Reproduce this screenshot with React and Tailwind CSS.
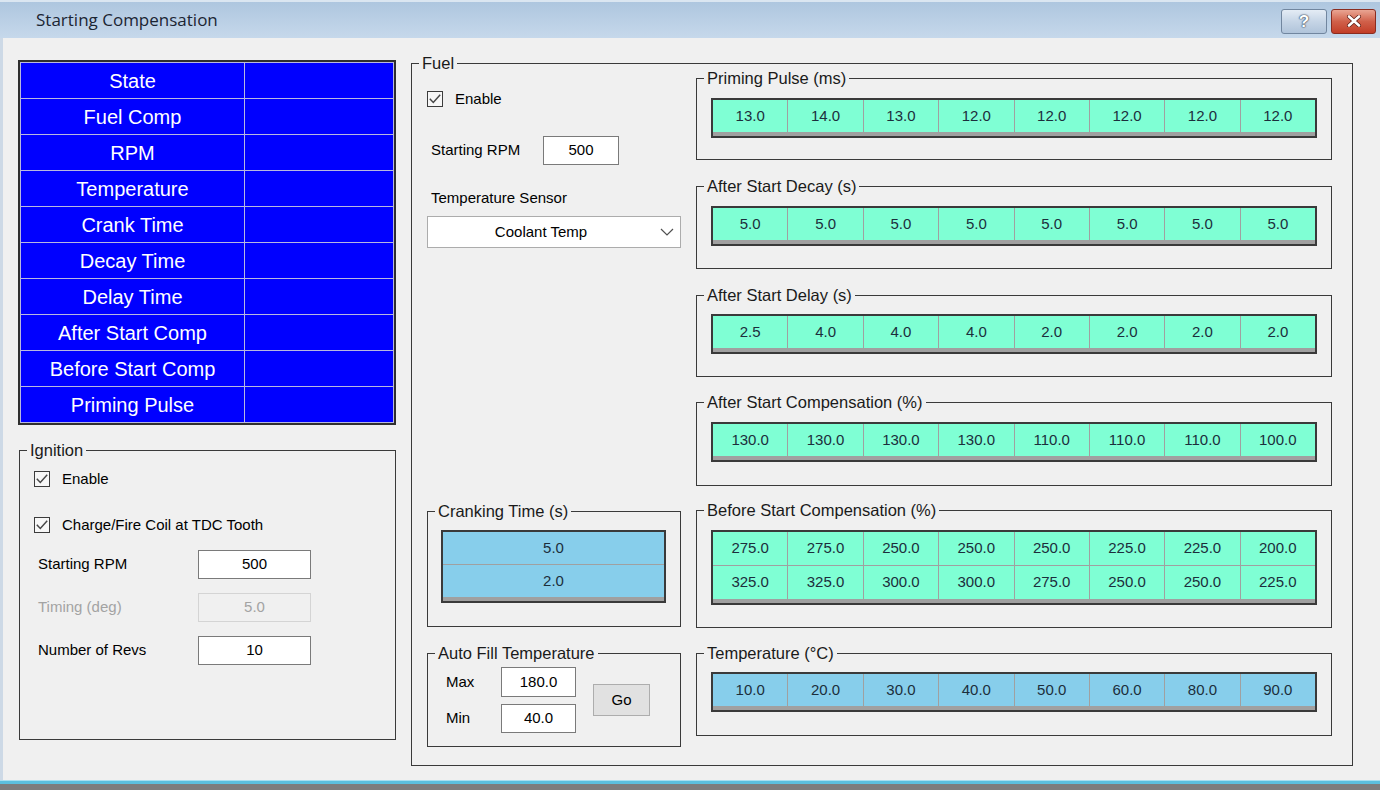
import React from "react";

const GREEN = "bg-[#7fffd4]";
const BLUE = "bg-[#87ceeb]";

function CheckBox({ label }) {
  return (
    <div className="flex items-center h-[16px]">
      <div className="w-[16px] h-[16px] border border-[#3c3c3c] bg-[#f7f7f7] flex items-center justify-center">
        <svg width="14" height="14" viewBox="0 0 14 14">
          <path d="M1.8 6.8 L5.3 10.4 L12.2 2.8" fill="none" stroke="#474747" strokeWidth="1.5" />
        </svg>
      </div>
      <span className="ml-[12px] text-[15px] leading-[18px] text-black">{label}</span>
    </div>
  );
}

function Box({ children, className = "", disabled = false }) {
  return (
    <div
      className={
        "h-[29px] flex items-center justify-center text-[15px] border " +
        (disabled
          ? "border-[#d4d4d4] bg-[#f0f0f0] text-[#a3a3a3] "
          : "border-[#7a7a7a] bg-white text-black ") +
        className
      }
    >
      {children}
    </div>
  );
}

function Group({ title, className = "", children }) {
  return (
    <div className={"relative border border-[#3a3a3a] " + className}>
      <span className="absolute -top-[10px] left-[7px] bg-[#f0f0f0] px-[3px] text-[16.5px] leading-[18px] text-[#1a1a1a] whitespace-nowrap">
        {title}
      </span>
      {children}
    </div>
  );
}

function Grid({ rows, color, cellH = "h-[32px]", cols = "grid-cols-8", width = "w-[606px]" }) {
  return (
    <div className={"border-2 border-[#3a3a3a] bg-[#a0a0a0] pb-[4px] " + width}>
      <div className={"grid gap-px " + cols}>
        {rows.flat().map((v, i) => (
          <div
            key={i}
            className={"flex items-center justify-center text-[15px] text-[#1c2e3c] " + cellH + " " + color}
          >
            {v}
          </div>
        ))}
      </div>
    </div>
  );
}

const stateRows = [
  "State",
  "Fuel Comp",
  "RPM",
  "Temperature",
  "Crank Time",
  "Decay Time",
  "Delay Time",
  "After Start Comp",
  "Before Start Comp",
  "Priming Pulse",
];

export default function App() {
  return (
    <div
      className="w-[1380px] h-[790px] flex flex-col bg-[#f0f0f0] overflow-hidden"
      style={{ fontFamily: '"Liberation Sans", Arial, sans-serif' }}
    >
      {/* Title bar */}
      <div className="h-[38px] shrink-0 flex items-center bg-linear-to-b from-[#aec6df] to-[#c6d8eb] border-t-[2px] border-[#dbe6f1]">
        <span
          className="pl-[36px] text-[17px] text-[#1b2533]"
          style={{ fontFamily: '"Open Sans", "Noto Sans", sans-serif' }}
        >
          Starting Compensation
        </span>
        <div className="ml-auto mr-[4px] flex gap-[4px] mt-[2px]">
          <div className="w-[46px] h-[25px] rounded-[3px] border border-[#71869f] bg-linear-to-b from-[#e4ecf5] via-[#c6d5e6] to-[#b0c4da] flex items-center justify-center">
            <span
              className="text-[17px] font-bold text-white leading-none"
              style={{ textShadow: "0 0 1px #3b4b60, 0 0 1px #3b4b60, 0 0 2px #3b4b60" }}
            >
              ?
            </span>
          </div>
          <div className="w-[45px] h-[25px] rounded-[3px] border border-[#8a2c20] bg-linear-to-b from-[#e9a593] via-[#d0604a] to-[#c23d27] flex items-center justify-center">
            <svg width="16" height="12" viewBox="0 0 16 12">
              <path d="M3 1.5 L13 10.5 M13 1.5 L3 10.5" stroke="#5a1a12" strokeWidth="4" strokeLinecap="round" />
              <path d="M3 1.5 L13 10.5 M13 1.5 L3 10.5" stroke="#ffffff" strokeWidth="2.6" strokeLinecap="round" />
            </svg>
          </div>
        </div>
      </div>

      {/* Body */}
      <div className="h-[742px] shrink-0 flex border-l-[3px] border-[#cdd9e6] pl-[15px] pt-[22px]">
        {/* Left column */}
        <div className="w-[378px] flex flex-col">
          <div className="border-2 border-[#2f2f2f] bg-[#b8b8e0] p-px grid grid-cols-[223px_1fr] gap-px">
            {stateRows.map((r) => (
              <React.Fragment key={r}>
                <div className="h-[35px] bg-[#0000ff] flex items-center justify-center text-white text-[20px]">
                  {r}
                </div>
                <div className="h-[35px] bg-[#0000ff]" />
              </React.Fragment>
            ))}
          </div>

          <Group title="Ignition" className="mt-[25px] ml-[1px] w-[377px] h-[290px]">
            <div className="flex flex-col pl-[14px] pt-[20px]">
              <CheckBox label="Enable" />
              <div className="mt-[30px]">
                <CheckBox label="Charge/Fire Coil at TDC Tooth" />
              </div>
              <div className="mt-[17px] flex items-center">
                <span className="w-[164px] pl-[4px] text-[15px]">Starting RPM</span>
                <Box className="w-[113px]">500</Box>
              </div>
              <div className="mt-[14px] flex items-center">
                <span className="w-[164px] pl-[4px] text-[15px] text-[#a3a3a3]">Timing (deg)</span>
                <Box className="w-[113px]" disabled>
                  5.0
                </Box>
              </div>
              <div className="mt-[14px] flex items-center">
                <span className="w-[164px] pl-[4px] text-[15px]">Number of Revs</span>
                <Box className="w-[113px]">10</Box>
              </div>
            </div>
          </Group>
        </div>

        {/* Fuel */}
        <Group title="Fuel" className="ml-[15px] mt-[3px] w-[942px] h-[703px]">
          <div className="flex pl-[15px] pt-[14px]">
            {/* Fuel left column */}
            <div className="w-[254px] flex flex-col">
              <div className="mt-[13px]">
                <CheckBox label="Enable" />
              </div>
              <div className="mt-[29px] flex items-center">
                <span className="w-[116px] pl-[4px] text-[15px]">Starting RPM</span>
                <Box className="w-[76px]">500</Box>
              </div>
              <div className="mt-[24px] pl-[4px] text-[15px] leading-[18px]">Temperature Sensor</div>
              <div className="mt-[9px] h-[32px] border border-[#acacac] bg-white flex items-center">
                <span className="flex-1 text-center text-[15px] pl-[2px]">Coolant Temp</span>
                <svg width="14" height="8" viewBox="0 0 14 8" className="mr-[6px] ml-[8px]">
                  <path d="M1 1 L7 7 L13 1" fill="none" stroke="#505050" strokeWidth="1.2" />
                </svg>
              </div>

              <Group title="Cranking Time (s)" className="mt-[263px] h-[116px]">
                <div className="pl-[13px] pt-[18px]">
                  <Grid rows={[["5.0"], ["2.0"]]} color={BLUE} cols="grid-cols-1" width="w-[225px]" />
                </div>
              </Group>

              <Group title="Auto Fill Temperature" className="mt-[26px] h-[94px]">
                <div className="flex items-center pl-[18px] pt-[13px]">
                  <div className="flex flex-col">
                    <div className="flex items-center">
                      <span className="w-[55px] text-[15px]">Max</span>
                      <Box className="w-[75px] h-[30px]">180.0</Box>
                    </div>
                    <div className="flex items-center mt-[7px]">
                      <span className="w-[55px] text-[15px]">Min</span>
                      <Box className="w-[75px]">40.0</Box>
                    </div>
                  </div>
                  <div className="ml-[17px] w-[57px] h-[32px] border border-[#adadad] bg-[#e1e1e1] flex items-center justify-center text-[15px]">
                    Go
                  </div>
                </div>
              </Group>
            </div>

            {/* Fuel right column */}
            <div className="ml-[15px] w-[636px] flex flex-col">
              <Group title="Priming Pulse (ms)" className="h-[82px]">
                <div className="pl-[14px] pt-[19px]">
                  <Grid rows={[["13.0", "14.0", "13.0", "12.0", "12.0", "12.0", "12.0", "12.0"]]} color={GREEN} />
                </div>
              </Group>
              <Group title="After Start Decay (s)" className="mt-[26px] h-[83px]">
                <div className="pl-[14px] pt-[19px]">
                  <Grid rows={[["5.0", "5.0", "5.0", "5.0", "5.0", "5.0", "5.0", "5.0"]]} color={GREEN} />
                </div>
              </Group>
              <Group title="After Start Delay (s)" className="mt-[26px] h-[82px]">
                <div className="pl-[14px] pt-[18px]">
                  <Grid rows={[["2.5", "4.0", "4.0", "4.0", "2.0", "2.0", "2.0", "2.0"]]} color={GREEN} />
                </div>
              </Group>
              <Group title="After Start Compensation (%)" className="mt-[25px] h-[84px]">
                <div className="pl-[14px] pt-[19px]">
                  <Grid
                    rows={[["130.0", "130.0", "130.0", "130.0", "110.0", "110.0", "110.0", "100.0"]]}
                    color={GREEN}
                  />
                </div>
              </Group>
              <Group title="Before Start Compensation (%)" className="mt-[24px] h-[118px]">
                <div className="pl-[14px] pt-[19px]">
                  <Grid
                    rows={[
                      ["275.0", "275.0", "250.0", "250.0", "250.0", "225.0", "225.0", "200.0"],
                      ["325.0", "325.0", "300.0", "300.0", "275.0", "250.0", "250.0", "225.0"],
                    ]}
                    color={GREEN}
                    cellH="h-[33px]"
                  />
                </div>
              </Group>
              <Group title="Temperature (°C)" className="mt-[25px] h-[83px]">
                <div className="pl-[14px] pt-[18px]">
                  <Grid
                    rows={[["10.0", "20.0", "30.0", "40.0", "50.0", "60.0", "80.0", "90.0"]]}
                    color={BLUE}
                  />
                </div>
              </Group>
            </div>
          </div>
        </Group>
      </div>

      {/* Bottom edge */}
      <div className="h-[4px] shrink-0 bg-[#5cc0de] border-t border-[#a9e0f0]" />
      <div className="flex-1 bg-[#7d7d7d]" />
    </div>
  );
}
